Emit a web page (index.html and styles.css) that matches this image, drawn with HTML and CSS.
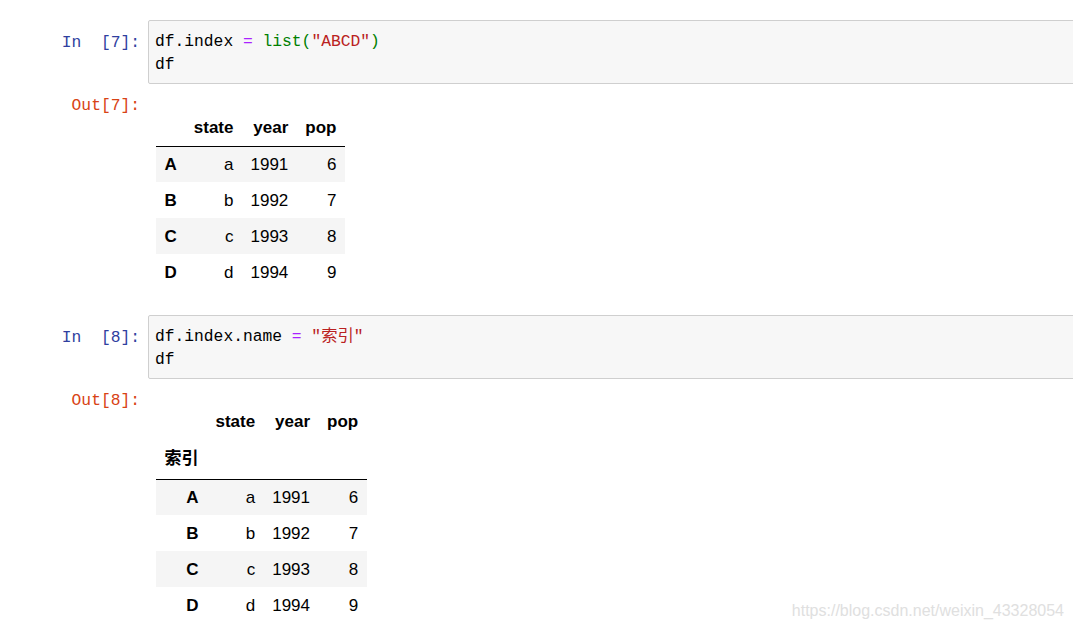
FILE: index.html
```html
<html>
<head>
  <meta charset="utf-8">
  <link rel="stylesheet" href="styles.css">
</head>
<body>
  <div class="notebook">
    <div class="cell">
      <div class="input">
        <div class="prompt in">In&nbsp;&nbsp;[7]:</div>
        <div class="code"><span>df.index</span> <span class="op">=</span> <span class="builtin">list(</span><span class="str">"ABCD"</span><span class="builtin">)</span>
df</div>
      </div>
      <div class="output">
        <div class="prompt out">Out[7]:</div>
        <div class="result">
          <table class="dataframe">
            <thead>
              <tr><th></th><th>state</th><th>year</th><th>pop</th></tr>
            </thead>
            <tbody>
              <tr><th class="left">A</th><td>a</td><td>1991</td><td>6</td></tr>
              <tr><th class="left">B</th><td>b</td><td>1992</td><td>7</td></tr>
              <tr><th class="left">C</th><td>c</td><td>1993</td><td>8</td></tr>
              <tr><th class="left">D</th><td>d</td><td>1994</td><td>9</td></tr>
            </tbody>
          </table>
        </div>
      </div>
    </div>

    <div class="cell">
      <div class="input">
        <div class="prompt in">In&nbsp;&nbsp;[8]:</div>
        <div class="code"><span>df.index.name</span> <span class="op">=</span> <span class="str">"索引"</span>
df</div>
      </div>
      <div class="output">
        <div class="prompt out">Out[8]:</div>
        <div class="result named">
          <table class="dataframe">
            <thead>
              <tr><th></th><th>state</th><th>year</th><th>pop</th></tr>
              <tr class="names"><th class="left">索引</th><th></th><th></th><th></th></tr>
            </thead>
            <tbody>
              <tr><th>A</th><td>a</td><td>1991</td><td>6</td></tr>
              <tr><th>B</th><td>b</td><td>1992</td><td>7</td></tr>
              <tr><th>C</th><td>c</td><td>1993</td><td>8</td></tr>
              <tr><th>D</th><td>d</td><td>1994</td><td>9</td></tr>
            </tbody>
          </table>
        </div>
      </div>
    </div>
  </div>
  <div class="watermark">https://blog.csdn.net/weixin_43328054</div>
</body>
</html>
```

FILE: styles.css
```css
body {
  margin: 0;
  background: #fff;
  overflow: hidden;
  font-family: "Liberation Sans", "Noto Sans CJK SC", sans-serif;
}
.notebook {
  padding-top: 20px;
  width: 1090px;
}
.cell {
  margin-bottom: 25px;
}
.input, .output {
  display: flex;
  align-items: flex-start;
}
.output {
  margin-top: 9px;
}
.prompt {
  width: 140px;
  flex: none;
  text-align: right;
  font-family: "Liberation Mono", "Noto Sans CJK SC", monospace;
  font-size: 16.3px;
  line-height: 23px;
  padding-right: 8px;
}
.input .prompt {
  padding-top: 11px;
}
.output .prompt {
  padding-top: 1px;
}
.prompt.in {
  color: #303f9f;
}
.prompt.out {
  color: #d84315;
}
.code {
  flex: 1;
  background: #f7f7f7;
  border: 1px solid #cfcfcf;
  border-radius: 2px;
  padding: 9px 6px 7px;
  height: 46px;
  font-family: "Liberation Mono", "Noto Sans CJK SC", monospace;
  font-size: 16.3px;
  line-height: 23px;
  white-space: pre;
  color: #000;
}
.code .op {
  color: #aa22ff;
}
.code .builtin {
  color: #008000;
}
.code .str {
  color: #ba2121;
}
.result {
  padding-top: 17px;
  padding-left: 8px;
}
.result.named {
  padding-top: 15px;
}
.dataframe {
  border-collapse: collapse;
  border-spacing: 0;
  font-size: 17px;
  color: #000;
}
.dataframe th, .dataframe td {
  text-align: right;
  vertical-align: middle;
  padding: 0 8.5px;
  height: 36px;
  line-height: 19px;
  white-space: nowrap;
}
.dataframe th {
  font-weight: bold;
}
.dataframe th.left {
  text-align: left;
}
.dataframe thead {
  border-bottom: 1px solid #000;
}
.dataframe thead tr.names th {
  height: 40px;
}
.dataframe tbody tr:nth-child(odd) {
  background: #f5f5f5;
}
.watermark {
  position: absolute;
  right: 9px;
  bottom: 10px;
  font-size: 16px;
  color: #e0e0e0;
}
```
